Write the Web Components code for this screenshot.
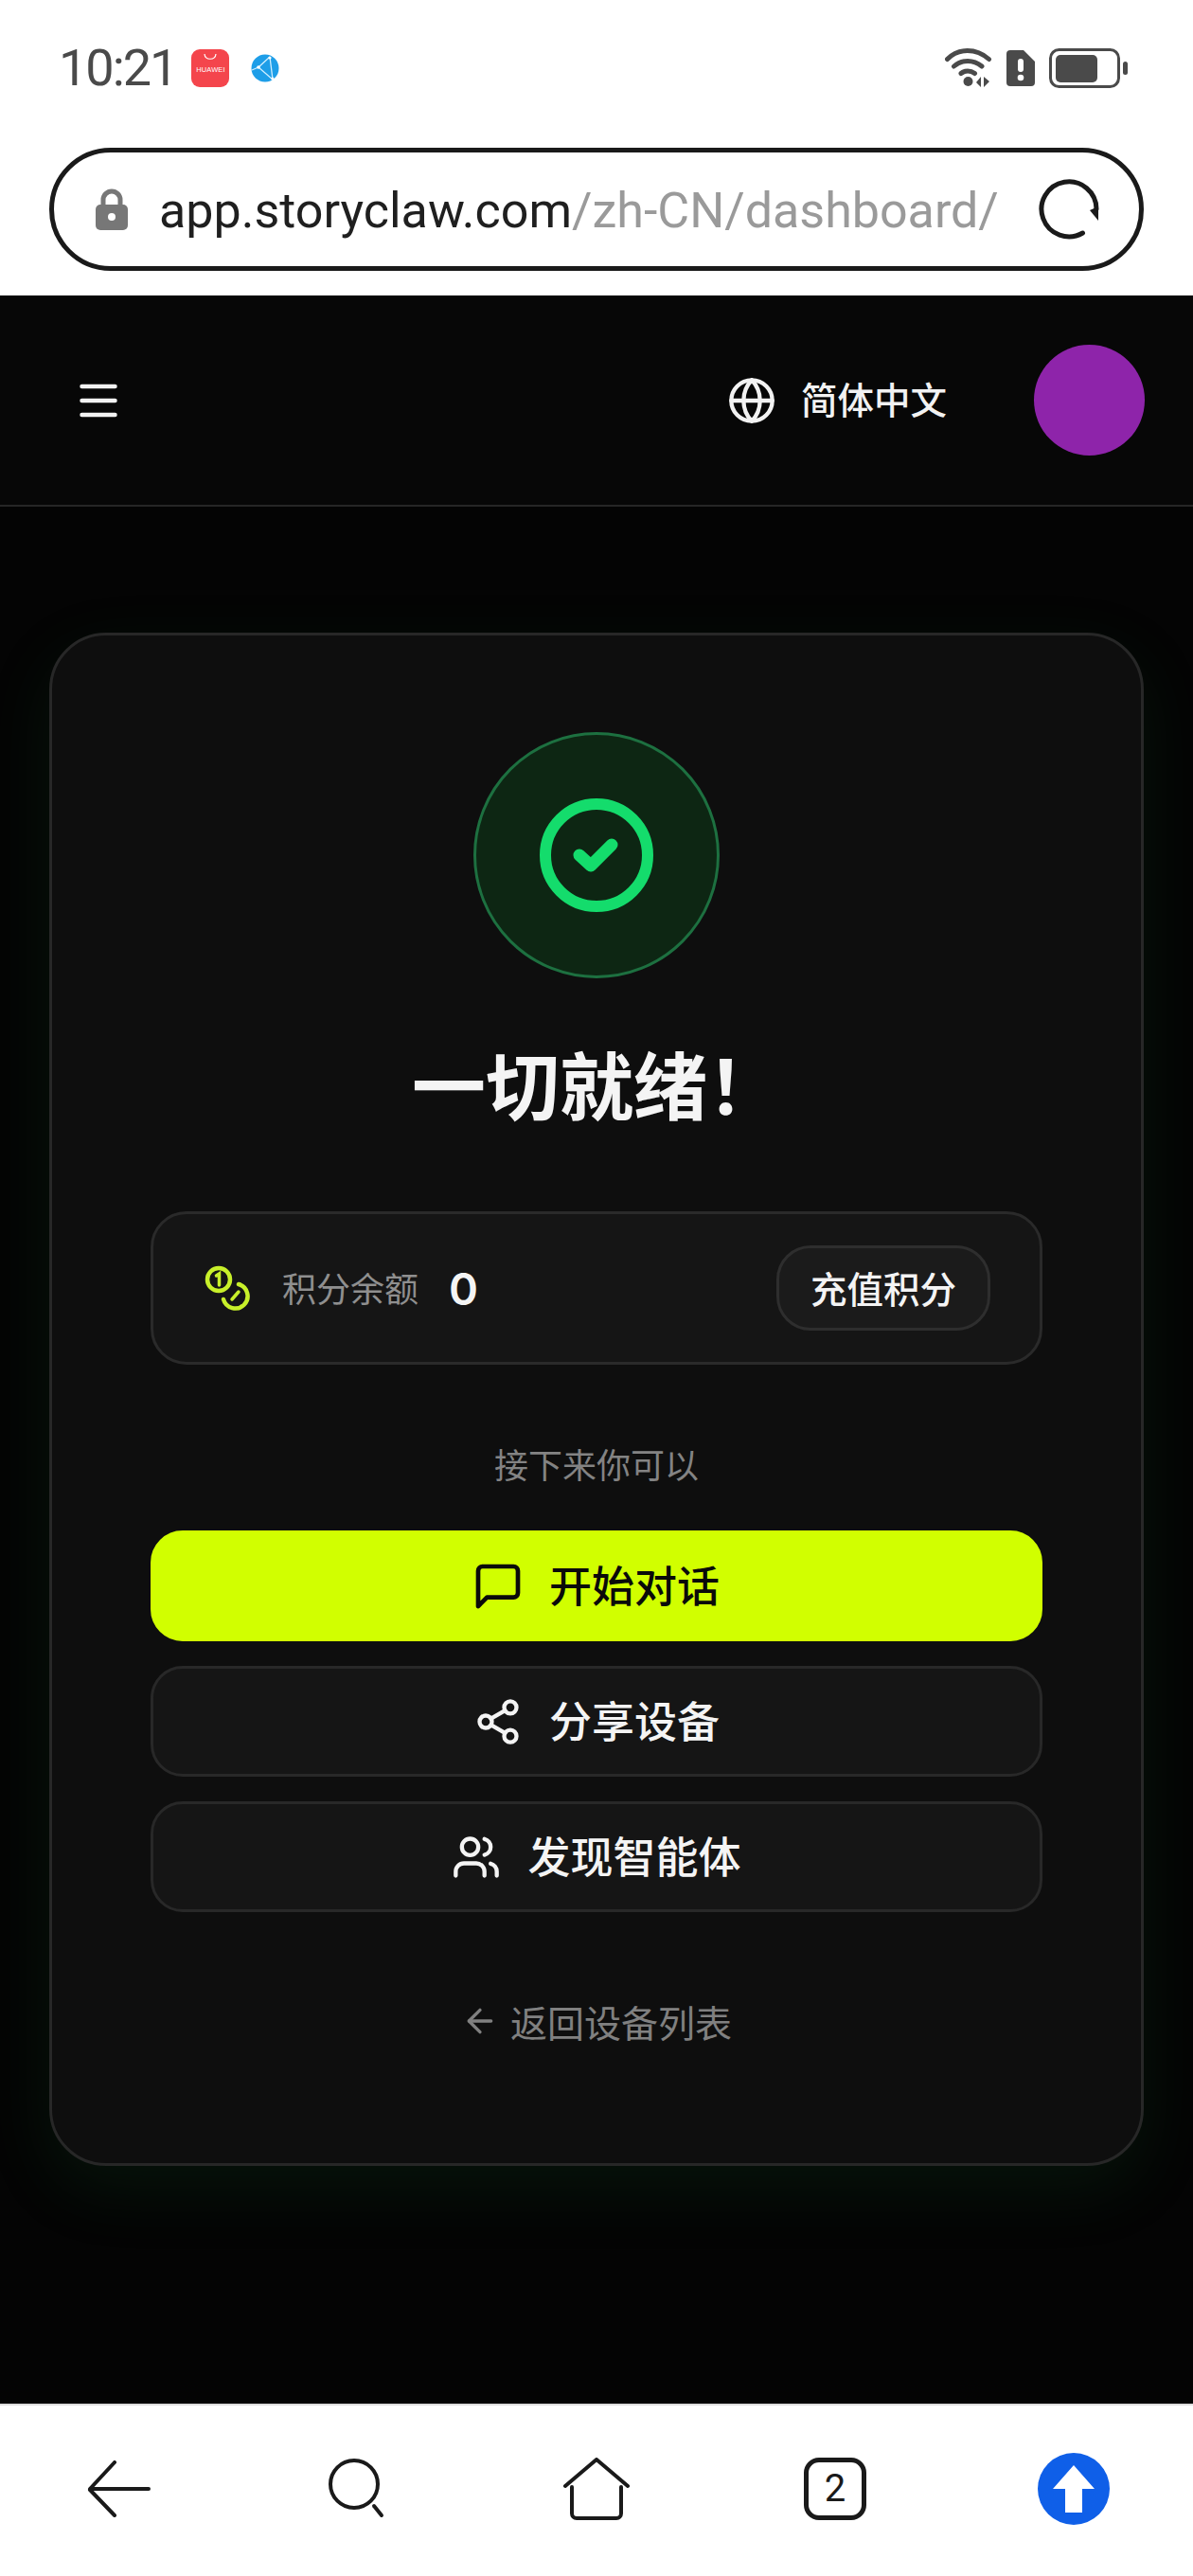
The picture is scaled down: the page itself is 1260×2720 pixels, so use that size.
<!DOCTYPE html>
<html lang="zh-CN">
<head>
<meta charset="utf-8">
<title>一切就绪</title>
<style>
    html, body { margin: 0; height: 100%; }
    body { width: 1260px; height: 2720px; overflow: hidden; background: #fff; font-family: "Noto Sans CJK SC", "Liberation Sans", sans-serif; }
    phone-page { height: 2720px; }
</style>
</head>
<body>
<phone-page>
    <status-bar></status-bar>
    <url-bar host="app.storyclaw.com" path="/zh-CN/dashboard/"></url-bar>
    <site-screen>
        <site-header slot="top" lang-name="简体中文"></site-header>
        <ready-card title-text="一切就绪！">
            <points-row label="积分余额" value="0" action="充值积分"></points-row>
            <p-hint>接下来你可以</p-hint>
            <action-button kind="primary">
                <svg slot="icon" width="56" height="56" viewBox="0 0 24 24"><path d="M21 15a2 2 0 0 1-2 2H7l-4 4V5a2 2 0 0 1 2-2h14a2 2 0 0 1 2 2z"/></svg>
                开始对话
            </action-button>
            <action-button>
                <svg slot="icon" width="52" height="52" viewBox="0 0 24 24"><circle cx="18" cy="5" r="3"/><circle cx="6" cy="12" r="3"/><circle cx="18" cy="19" r="3"/><path d="m8.59 13.51 6.83 3.98"/><path d="m15.41 6.51-6.82 3.98"/></svg>
                分享设备
            </action-button>
            <action-button>
                <svg slot="icon" width="52" height="52" viewBox="0 0 24 24"><path d="M16 21v-2a4 4 0 0 0-4-4H6a4 4 0 0 0-4 4v2"/><circle cx="9" cy="7" r="4"/><path d="M22 21v-2a4 4 0 0 0-3-3.87"/><path d="M16 3.13a4 4 0 0 1 0 7.75"/></svg>
                发现智能体
            </action-button>
            <back-link>返回设备列表</back-link>
        </ready-card>
    </site-screen>
    <browser-toolbar tabs="2"></browser-toolbar>
</phone-page>

<script>
class CustomElement extends HTMLElement {
    $style() {
        return '';
    }

    $template() {
        return '';
    }

    constructor() {
        super();
        this.$dom = this.attachShadow({mode: 'open'});
    }

    connectedCallback() {
        this.$dom.innerHTML = '<style>' + this.$style() + '</style>' + this.$template();
    }

    static define(tagName, classConstructor) {
        window.customElements.define(tagName, classConstructor);
    }
}

class PhonePage extends CustomElement {
    $style() {
        return `:host { display: flex; flex-direction: column; width: 1260px; }`;
    }

    $template() {
        return `<slot></slot>`;
    }
}

class StatusBar extends CustomElement {
    $style() {
        return `
            :host { display: flex; align-items: center; height: 144px; padding: 0 68px 0 62px; box-sizing: border-box; background: #fff; color: #4a4a4a; }
            .time { font: 400 54px/1 Roboto, "Liberation Sans", sans-serif; margin-right: 16px; letter-spacing: -2px; }
            .app { display: flex; flex-direction: column; align-items: center; width: 40px; height: 40px; border-radius: 9px; background: #f4454c; color: #fff; }
            .app svg { margin-top: 4px; }
            .app span { font: 400 7.5px/1 "Liberation Sans", sans-serif; margin-top: 6px; letter-spacing: 0.1px; }
            .globe { margin-left: 23px; }
            .right { margin-left: auto; display: flex; align-items: center; gap: 15px; }
        `;
    }

    $template() {
        return `
            <span class="time">10:21</span>
            <span class="app">
                <svg width="14" height="8" viewBox="0 0 14 8" fill="none" stroke="#fff" stroke-width="1.2"><path d="M1 1c.6 7 11.400 7 12 0"/></svg>
                <span>HUAWEI</span>
            </span>
            <svg class="globe" width="30" height="30" viewBox="0 0 30 30">
                <circle cx="15" cy="15" r="14.500" fill="#1e9ee8"/>
                <path d="M20 3 8 14l15 13M20 3l3 24M8 14l-7 3" fill="none" stroke="#cfeeff" stroke-width="1.300"/>
                <circle cx="8" cy="14" r="1.800" fill="#fff"/><circle cx="20" cy="4" r="1.600" fill="#fff"/><circle cx="23" cy="26" r="1.600" fill="#fff"/>
            </svg>
            <span class="right">
                <svg width="50" height="42" viewBox="0 0 50 42" fill="none" stroke="#4a4a4a" stroke-width="5" stroke-linecap="round">
                    <path d="M2.500 11.500C14 -.5 33 -.5 46.500 11.500"/>
                    <path d="M9.500 19C18 11.500 30 11.500 39 19"/>
                    <path d="M17 26.500C21 23 27 23 31.500 26.500"/>
                    <circle cx="24.500" cy="35" r="5" fill="#4a4a4a" stroke="none"/>
                    <path d="M38 30v11l-5-5zM41 30l6 5-6 6z" fill="#4a4a4a" stroke="none"/>
                </svg>
                <svg width="30" height="38" viewBox="0 0 30 38">
                    <path d="M4 0h14l12 12v22a4 4 0 0 1-4 4H4a4 4 0 0 1-4-4V4a4 4 0 0 1 4-4z" fill="#4a4a4a"/>
                    <rect x="12" y="9" width="6" height="14" rx="3" fill="#fff"/>
                    <circle cx="15" cy="29" r="3.300" fill="#fff"/>
                </svg>
                <svg width="84" height="42" viewBox="0 0 84 42">
                    <rect x="1.500" y="1.500" width="72" height="39" rx="9" fill="none" stroke="#4a4a4a" stroke-width="3"/>
                    <rect x="7" y="7" width="44" height="29" rx="5" fill="#4a4a4a"/>
                    <rect x="78" y="14" width="5" height="14" rx="2.500" fill="#4a4a4a"/>
                </svg>
            </span>
        `;
    }
}

class UrlBar extends CustomElement {
    $style() {
        return `
            :host { display: block; height: 168px; padding: 12px 52px 0; box-sizing: border-box; background: #fff; }
            .pill { display: flex; align-items: center; height: 130px; padding: 0 40px 0 44px; box-sizing: border-box; border: 5px solid #1a1a1a; border-radius: 65px; }
            .lock { flex: none; margin-right: 33px; }
            .text { white-space: nowrap; padding-top: 3px; font: 400 52px/70px Roboto, "Liberation Sans", sans-serif; color: #9a9a9a; }
            .text b { font-weight: 400; color: #1f1f1f; }
            .reload { flex: none; margin-left: auto; }
        `;
    }

    $template() {
        return `
            <div class="pill">
                <svg class="lock" width="34" height="44" viewBox="0 0 34 44">
                    <path d="M8 20v-8a9 9 0 0 1 18 0v8" fill="none" stroke="#777" stroke-width="5"/>
                    <rect x="0" y="17" width="34" height="27" rx="5" fill="#777"/>
                    <circle cx="17" cy="30" r="4" fill="#fff"/>
                </svg>
                <span class="text"><b>${this.getAttribute('host')}</b>${this.getAttribute('path')}</span>
                <svg class="reload" width="68" height="68" viewBox="0 0 68 68" fill="none" stroke="#1a1a1a" stroke-width="5" stroke-linecap="round">
                    <path d="M48.500 59A29 29 0 1 1 63 34"/>
                    <path d="M65 31v15L56 35z" fill="#1a1a1a" stroke="none"/>
                </svg>
            </div>
        `;
    }
}

class SiteScreen extends CustomElement {
    $style() {
        return `
            :host { display: flex; flex-direction: column; height: 2226px; background: #040404; }
            main { flex: 1; padding: 133px 52px 0; }
        `;
    }

    $template() {
        return `<slot name="top"></slot><main><slot></slot></main>`;
    }
}

class SiteHeader extends CustomElement {
    $style() {
        return `
            :host { display: flex; align-items: center; height: 223px; padding: 0 51px 0 84px; box-sizing: border-box; background: #070707; border-bottom: 2px solid #262626; color: #f2f2f2; }
            svg { fill: none; stroke: currentColor; stroke-linecap: round; stroke-linejoin: round; }
            .lang { margin-left: auto; display: flex; align-items: center; gap: 26px; font-size: 38.5px; font-weight: 500; }
            .lang span { padding-bottom: 5px; }
            .avatar { width: 117px; height: 117px; border-radius: 50%; background: #8e24aa; margin-left: 92px; }
        `;
    }

    $template() {
        return `
            <svg width="40" height="40" viewBox="0 0 40 40" stroke-width="4.500"><path d="M2.500 5h35M2.500 20h35M2.500 35h35"/></svg>
            <div class="lang">
                <svg width="52" height="52" viewBox="0 0 24 24" stroke-width="2"><circle cx="12" cy="12" r="10"/><path d="M12 2a14.500 14.500 0 0 0 0 20 14.500 14.500 0 0 0 0-20"/><path d="M2 12h20"/></svg>
                <span>${this.getAttribute('lang-name')}</span>
            </div>
            <div class="avatar"></div>
        `;
    }
}

class ReadyCard extends CustomElement {
    $style() {
        return `
            :host { display: flex; flex-direction: column; height: 1619px; padding: 102px 104px 0; box-sizing: border-box; background: #0e0e0e; border: 3px solid #272727; border-radius: 60px; box-shadow: 0 24px 70px rgba(30, 120, 60, 0.14); }
            .badge { display: flex; align-items: center; justify-content: center; align-self: center; width: 260px; height: 260px; box-sizing: border-box; border-radius: 50%; background: #0d2613; border: 3px solid #1d7040; }
            h1 { margin: 53px 0 79px; text-align: center; font-size: 78px; line-height: 114px; font-weight: 700; color: #f4f4f4; }
            ::slotted(action-button) { margin-bottom: 26px; }
        `;
    }

    $template() {
        return `
            <div class="badge">
                <svg width="120" height="120" viewBox="0 0 120 120" fill="none" stroke="#14dc6c" stroke-linecap="round" stroke-linejoin="round">
                    <circle cx="60" cy="60" r="54" stroke-width="12"/>
                    <path d="M42 60l12 11 22-22" stroke-width="13"/>
                </svg>
            </div>
            <h1>${this.getAttribute('title-text')}</h1>
            <slot></slot>
        `;
    }
}

class PointsRow extends CustomElement {
    $style() {
        return `
            :host { display: flex; align-items: center; height: 162px; padding: 0 52px 0 54px; box-sizing: border-box; background: #151515; border: 3px solid #2a2a2a; border-radius: 38px; }
            svg { margin-top: 2px; }
            .label { margin-left: 32px; padding-bottom: 3px; font-size: 36px; color: #8f8f8f; }
            .value { margin-left: 32px; font: 600 47px/1 Inter, "Liberation Sans", sans-serif; color: #f4f4f4; }
            button { margin-left: auto; width: 226px; height: 90px; padding: 0 0 3px; border: 3px solid #2e2e2e; border-radius: 36px; background: #1b1b1b; color: #f4f4f4; font: 500 38.500px "Noto Sans CJK SC", sans-serif; }
        `;
    }

    $template() {
        return `
            <svg width="50" height="50" viewBox="0 0 50 50" fill="none" stroke="#c8f02a" stroke-width="4.500" stroke-linecap="round">
                <circle cx="15" cy="15" r="12"/>
                <path d="M12.500 11l3-2v12" stroke-width="3.500"/>
                <path d="M36 20A13 13 0 1 1 20 36"/>
                <path d="M29 36l7-8" stroke-width="3.500"/>
            </svg>
            <span class="label">${this.getAttribute('label')}</span>
            <span class="value">${this.getAttribute('value')}</span>
            <button>${this.getAttribute('action')}</button>
        `;
    }
}

class PHint extends CustomElement {
    $style() {
        return `:host { display: block; margin: 78px 0 45px; text-align: center; font-size: 36px; line-height: 52px; color: #838383; }`;
    }

    $template() {
        return `<slot></slot>`;
    }
}

class ActionButton extends CustomElement {
    $style() {
        return `
            :host { display: flex; align-items: center; justify-content: center; gap: 26px; height: 117px; padding-right: 2px; box-sizing: border-box; border: 3px solid #282828; border-radius: 34px; background: #151515; color: #f4f4f4; font-size: 45px; font-weight: 500; }
            :host([kind="primary"]) { background: #d1ff00; border-color: #d1ff00; color: #0a0a0a; }
            .icon { display: flex; align-items: center; justify-content: center; width: 56px; height: 56px; }
            .label { padding-bottom: 4px; }
            ::slotted(svg) { fill: none; stroke: currentColor; stroke-width: 2; stroke-linecap: round; stroke-linejoin: round; }
        `;
    }

    $template() {
        return `<span class="icon"><slot name="icon"></slot></span><span class="label"><slot></slot></span>`;
    }
}

class BackLink extends CustomElement {
    $style() {
        return `
            :host { display: flex; align-items: center; justify-content: center; gap: 12px; margin-top: 61px; font-size: 39px; line-height: 56px; color: #808080; }
        `;
    }

    $template() {
        return `
            <svg width="40" height="40" viewBox="0 0 24 24" fill="none" stroke="currentColor" stroke-width="2" stroke-linecap="round" stroke-linejoin="round"><path d="m12 19-7-7 7-7"/><path d="M19 12H5"/></svg>
            <span><slot></slot></span>
        `;
    }
}

class BrowserToolbar extends CustomElement {
    $style() {
        return `
            :host { display: grid; grid-template-columns: repeat(5, 1fr); align-items: center; justify-items: center; height: 182px; padding-bottom: 4px; box-sizing: border-box; background: #fff; border-top: 2px solid #ddd; }
            svg { fill: none; stroke: #1a1a1a; stroke-width: 4; stroke-linecap: round; stroke-linejoin: round; }
            .tabs { display: flex; align-items: center; justify-content: center; width: 66px; height: 66px; box-sizing: border-box; border: 5px solid #1a1a1a; border-radius: 16px; font: 400 40px/1 Roboto, "Liberation Sans", sans-serif; color: #1a1a1a; }
            .up { display: flex; align-items: center; justify-content: center; width: 76px; height: 76px; border-radius: 50%; background: #0f5fe8; }
            .up svg { fill: #fff; stroke: none; }
        `;
    }

    $template() {
        return `
            <svg width="68" height="60" viewBox="0 0 68 60"><path d="M29 2 3 30h62M3 31l26 27"/></svg>
            <svg width="62" height="64" viewBox="0 0 62 64"><circle cx="27" cy="27" r="25"/><path d="m48 50 8 10"/></svg>
            <svg width="70" height="66" viewBox="0 0 70 66"><path d="M2 30 35 2l33 28"/><path d="M9 31v28a5 5 0 0 0 5 5h42a5 5 0 0 0 5-5V31"/></svg>
            <span class="tabs">${this.getAttribute('tabs')}</span>
            <span class="up"><svg width="44" height="50" viewBox="0 0 44 50"><path d="M22 0 44 25H31v25H13V25H0z"/></svg></span>
        `;
    }
}

CustomElement.define('phone-page', PhonePage);
CustomElement.define('status-bar', StatusBar);
CustomElement.define('url-bar', UrlBar);
CustomElement.define('site-screen', SiteScreen);
CustomElement.define('site-header', SiteHeader);
CustomElement.define('ready-card', ReadyCard);
CustomElement.define('points-row', PointsRow);
CustomElement.define('p-hint', PHint);
CustomElement.define('action-button', ActionButton);
CustomElement.define('back-link', BackLink);
CustomElement.define('browser-toolbar', BrowserToolbar);
</script>
</body>
</html>
